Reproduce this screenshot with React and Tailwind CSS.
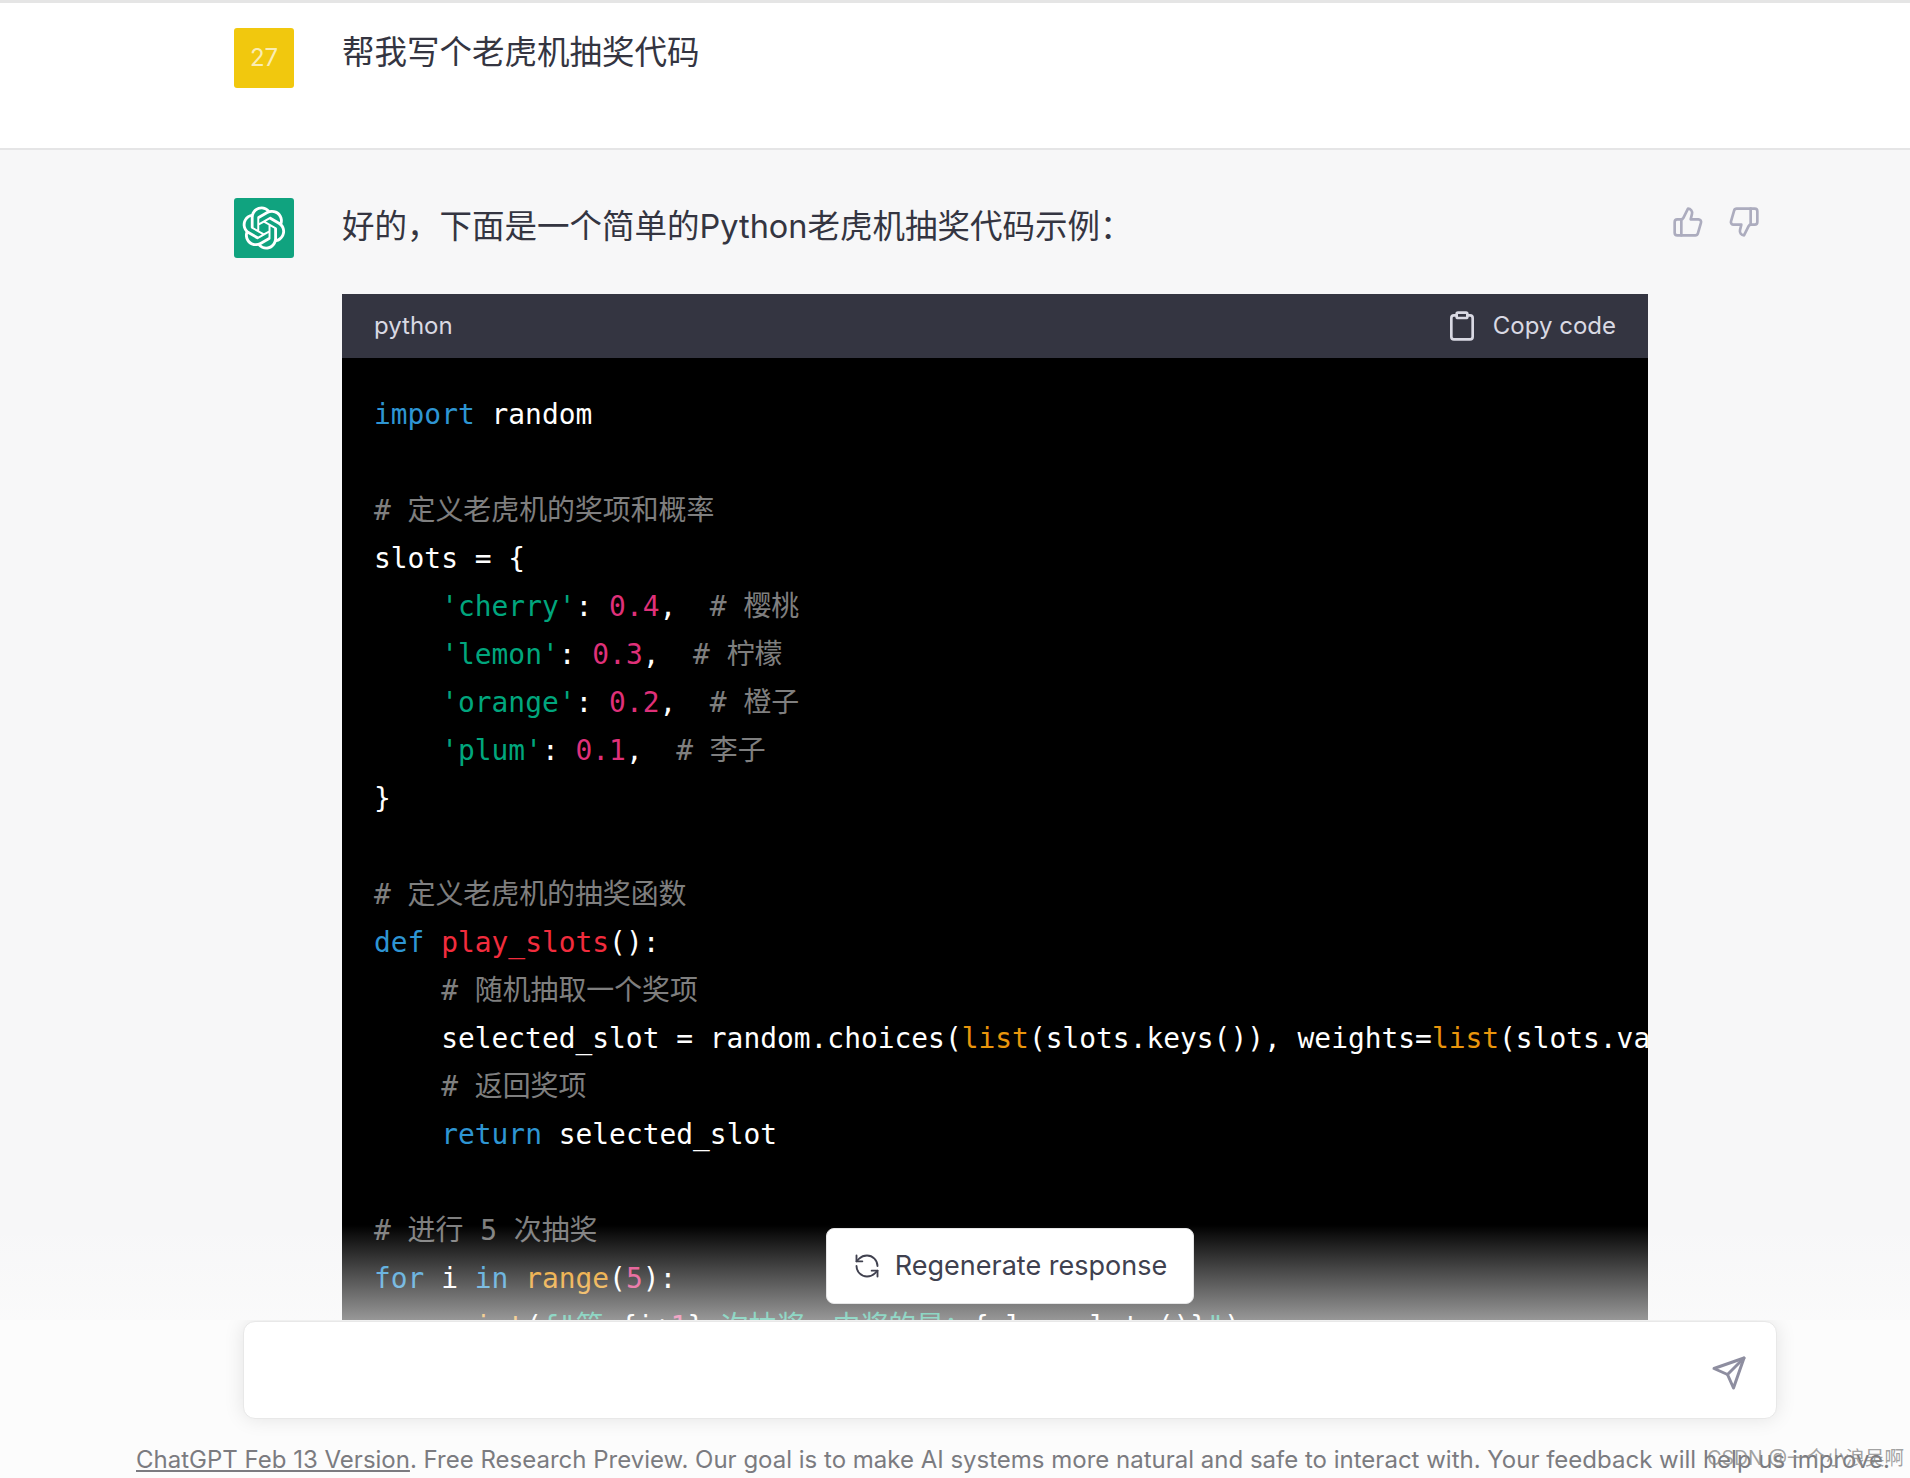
import React from 'react';
import { ThumbsUp, ThumbsDown, Clipboard, RefreshCcw } from 'lucide-react';

const K = ({ children }) => <span className="text-[#2e95d3]">{children}</span>;
const S = ({ children }) => <span className="text-[#00a67d]">{children}</span>;
const N = ({ children }) => <span className="text-[#df3079]">{children}</span>;
const C = ({ children }) => <span className="text-white/50">{children}</span>;
const F = ({ children }) => <span className="text-[#f22c3d]">{children}</span>;
const B = ({ children }) => <span className="text-[#e9950c]">{children}</span>;

const codeLines = [
  <><K>import</K> random</>,
  '',
  <C># 定义老虎机的奖项和概率</C>,
  'slots = {',
  <>    <S>'cherry'</S>: <N>0.4</N>,  <C># 樱桃</C></>,
  <>    <S>'lemon'</S>: <N>0.3</N>,  <C># 柠檬</C></>,
  <>    <S>'orange'</S>: <N>0.2</N>,  <C># 橙子</C></>,
  <>    <S>'plum'</S>: <N>0.1</N>,  <C># 李子</C></>,
  '}',
  '',
  <C># 定义老虎机的抽奖函数</C>,
  <><K>def</K> <F>play_slots</F>():</>,
  <>    <C># 随机抽取一个奖项</C></>,
  <>    selected_slot = random.choices(<B>list</B>(slots.keys()), weights=<B>list</B>(slots.values()))[<N>0</N>]</>,
  <>    <C># 返回奖项</C></>,
  <>    <K>return</K> selected_slot</>,
  '',
  <C># 进行 5 次抽奖</C>,
  <><K>for</K> i <K>in</K> <B>range</B>(<N>5</N>):</>,
  <>    <B>print</B>(<S>f"第 </S>{'{'}i+<N>1</N>{'}'}<S> 次抽奖，中奖的是：</S>{'{'}play_slots(){'}'}<S>"</S>)</>,
];

const OpenAILogo = () => (
  <svg viewBox="0 0 41 41" className="w-11 h-11" fill="none">
    <path
      fill="#ffffff"
      d="M37.5324 16.8707C37.9808 15.5241 38.1363 14.0974 37.9886 12.6859C37.8409 11.2744 37.3934 9.91076 36.676 8.68622C35.6126 6.83404 33.9882 5.3676 32.0373 4.4985C30.0864 3.62941 27.9098 3.40259 25.8215 3.85078C24.8796 2.7893 23.7219 1.94125 22.4257 1.36341C21.1295 0.785575 19.7249 0.491269 18.3058 0.500197C16.1708 0.495044 14.0893 1.16803 12.3614 2.42214C10.6335 3.67624 9.34853 5.44666 8.6917 7.47815C7.30085 7.76286 5.98686 8.3414 4.8377 9.17505C3.68854 10.0087 2.73073 11.0782 2.02839 12.312C0.956464 14.1591 0.498905 16.2988 0.721698 18.4228C0.944492 20.5467 1.83612 22.5449 3.268 24.1293C2.81966 25.4759 2.66413 26.9026 2.81182 28.3141C2.95951 29.7256 3.40701 31.0892 4.12437 32.3138C5.18791 34.1659 6.8123 35.6322 8.76321 36.5013C10.7141 37.3704 12.8907 37.5973 14.9789 37.1492C15.9208 38.2107 17.0786 39.0587 18.3747 39.6366C19.6709 40.2144 21.0755 40.5087 22.4946 40.4998C24.6307 40.5054 26.7133 39.8321 28.4418 38.5772C30.1704 37.3223 31.4556 35.5506 32.1119 33.5179C33.5027 33.2332 34.8167 32.6547 35.9659 31.821C37.115 30.9874 38.0728 29.9178 38.7752 28.684C39.8458 26.8371 40.3023 24.6979 40.0789 22.5748C39.8556 20.4517 38.9639 18.4544 37.5324 16.8707ZM22.4978 37.8849C20.7443 37.8874 19.0459 37.2733 17.6994 36.1501C17.7601 36.117 17.8666 36.0586 17.936 36.0161L25.9004 31.4156C26.1003 31.3019 26.2663 31.137 26.3813 30.9378C26.4964 30.7386 26.5563 30.5124 26.5549 30.2825V19.0542L29.9213 20.998C29.9389 21.0068 29.9541 21.0198 29.9656 21.0359C29.977 21.052 29.9842 21.0707 29.9867 21.0902V30.3889C29.9842 32.375 29.1946 34.2791 27.7909 35.6841C26.3872 37.0892 24.4838 37.8806 22.4978 37.8849ZM6.39227 31.0064C5.51397 29.4888 5.19742 27.7107 5.49804 25.9832C5.55718 26.0187 5.66048 26.0818 5.73461 26.1244L13.699 30.7248C13.8975 30.8408 14.1233 30.902 14.3532 30.902C14.583 30.902 14.8088 30.8408 15.0073 30.7248L24.731 25.1103V28.9979C24.7321 29.0177 24.7283 29.0376 24.7199 29.0556C24.7115 29.0736 24.6988 29.0893 24.6829 29.1012L16.6317 33.7497C14.9096 34.7416 12.8643 35.0097 10.9447 34.4954C9.02506 33.9811 7.38785 32.7263 6.39227 31.0064ZM4.29707 13.6194C5.17156 12.0998 6.55279 10.9364 8.19885 10.3327C8.19885 10.4013 8.19491 10.5228 8.19491 10.6071V19.808C8.19351 20.0378 8.25334 20.2638 8.36823 20.4629C8.48312 20.6619 8.64893 20.8267 8.84863 20.9404L18.5723 26.5542L15.206 28.4979C15.1894 28.5089 15.1703 28.5155 15.1505 28.5173C15.1307 28.5191 15.1107 28.516 15.0924 28.5082L7.04046 23.8557C5.32135 22.8601 4.06716 21.2235 3.55289 19.3046C3.03862 17.3858 3.30624 15.3413 4.29707 13.6194ZM31.955 20.0556L22.2312 14.4411L25.5976 12.4981C25.6142 12.4872 25.6333 12.4805 25.6531 12.4787C25.6729 12.4769 25.6928 12.4801 25.7111 12.4879L33.7631 17.1364C34.9967 17.849 36.0017 18.8982 36.6606 20.1613C37.3194 21.4244 37.6047 22.849 37.4832 24.2684C37.3617 25.6878 36.8382 27.0432 35.9743 28.1759C35.1103 29.3086 33.9415 30.1717 32.6047 30.6641C32.6047 30.5947 32.6047 30.4733 32.6047 30.3889V21.188C32.6066 20.9586 32.5474 20.7328 32.4332 20.5338C32.319 20.3348 32.154 20.1698 31.955 20.0556ZM35.3055 15.0128C35.2464 14.9765 35.1431 14.9142 35.069 14.8717L27.1045 10.2712C26.906 10.1554 26.6803 10.0943 26.4504 10.0943C26.2206 10.0943 25.9948 10.1554 25.7963 10.2712L16.0726 15.8858V11.9982C16.0715 11.9783 16.0753 11.9585 16.0837 11.9405C16.0921 11.9225 16.1048 11.9068 16.1207 11.8949L24.1719 7.25025C25.4053 6.53903 26.8158 6.19376 28.2383 6.25482C29.6608 6.31589 31.0364 6.78077 32.2044 7.59508C33.3723 8.40939 34.2842 9.53945 34.8334 10.8531C35.3826 12.1667 35.5464 13.6095 35.3055 15.0128ZM14.2424 21.9419L10.8752 19.9981C10.8576 19.9893 10.8423 19.9763 10.8309 19.9602C10.8195 19.9441 10.8122 19.9254 10.8098 19.9058V10.6071C10.8107 9.18295 11.2173 7.78848 11.9819 6.58696C12.7466 5.38544 13.8377 4.42659 15.1275 3.82264C16.4173 3.21869 17.8524 2.99464 19.2649 3.1767C20.6775 3.35876 22.0089 3.93941 23.1034 4.85067C23.0427 4.88379 22.937 4.94215 22.8668 4.98473L14.9024 9.58517C14.7025 9.69878 14.5366 9.86356 14.4215 10.0626C14.3065 10.2616 14.2466 10.4877 14.2479 10.7175L14.2424 21.9419ZM16.071 17.9991L20.4018 15.4978L24.7325 17.9975V22.9985L20.4018 25.4983L16.071 22.9985V17.9991Z"
    />
  </svg>
);

const SendIcon = () => (
  <svg viewBox="0 0 24 24" className="w-9 h-9" fill="none" stroke="#8e8ea0" strokeWidth="2" strokeLinecap="round" strokeLinejoin="round">
    <line x1="22" y1="2" x2="11" y2="13" />
    <polygon points="22 2 15 22 11 13 2 9 22 2" />
  </svg>
);

const CodeBlock = () => (
  <div className="w-[1306px] mb-[200px]">
    <div className="h-16 px-8 flex items-center justify-between bg-[#343541] text-[#d9d9e3] text-2xl">
      <span>python</span>
      <div className="flex items-center gap-[15px]">
        <Clipboard className="w-8 h-8" strokeWidth={2} />
        <span>Copy code</span>
      </div>
    </div>
    <div className="bg-black pt-[33px] px-8 pb-8 overflow-hidden text-white text-[27.9px] leading-[48px] whitespace-pre font-['DejaVu_Sans_Mono','Noto_Sans_CJK_SC',monospace]">
      {codeLines.map((line, i) => (
        <div key={i} className="h-12">{line}</div>
      ))}
    </div>
  </div>
);

export default function App() {
  return (
    <div className="relative h-[1478px] w-[1910px] overflow-hidden bg-[#f7f7f8] text-[#343541] font-['Inter','Noto_Sans_CJK_SC',sans-serif]">
      <div className="h-[3px] bg-[#e5e5e5]" />

      {/* user message */}
      <div className="h-[147px] bg-white border-b-2 border-[#e5e5e6] pt-[25px] pl-[234px] flex gap-12">
        <div className="w-[60px] h-[60px] rounded-[3px] bg-[#f1c80e] text-white/70 text-2xl flex items-center justify-center">27</div>
        <div className="text-[32.5px] leading-[50px]">帮我写个老虎机抽奖代码</div>
      </div>

      {/* assistant message */}
      <div className="pt-12 pl-[234px] flex gap-12">
        <div className="w-[60px] h-[60px] rounded-[3px] bg-[#10a37f] flex items-center justify-center shrink-0">
          <OpenAILogo />
        </div>
        <div>
          <div className="text-[32.5px] leading-[58px] mb-[38px]">好的，下面是一个简单的Python老虎机抽奖代码示例：</div>
          <CodeBlock />
        </div>
        <div className="flex gap-6 pt-2 -ml-[24px] text-[#acacbe]">
          <ThumbsUp className="w-8 h-8" strokeWidth={2} />
          <ThumbsDown className="w-8 h-8" strokeWidth={2} />
        </div>
      </div>

      {/* bottom input panel, lies over the thread */}
      <div className="absolute inset-x-0 bottom-0 flex flex-col">
        <div className="h-[95px] pt-[3px] flex justify-center bg-[linear-gradient(to_bottom,rgba(252,252,252,0),rgba(252,252,252,0.6))]">
          <button className="w-[368px] h-[76px] ml-[110px] rounded-lg bg-white border border-[#e5e5e6] flex items-center justify-center gap-[14px] text-[27px] text-[#40414f]">
            <RefreshCcw className="w-7 h-7" strokeWidth={1.6} />
            <span>Regenerate response</span>
          </button>
        </div>
        <div className="h-[158px] bg-[#fcfcfc] pl-[243px] overflow-hidden">
          <div className="w-[1534px] h-[98px] mt-px rounded-xl bg-white shadow-[0_0_20px_rgba(0,0,0,0.1)] border border-[#e8e8e8] flex items-center justify-end pr-[29px] pt-[6px]">
            <SendIcon />
          </div>
          <div className="-ml-[107px] mt-[25px] whitespace-nowrap text-2xl leading-8 text-[#7b7b80]">
            <span className="underline">ChatGPT Feb 13 Version</span>. Free Research Preview. Our goal is to make AI systems more natural and safe to interact with. Your feedback will help us improve.
          </div>
        </div>
      </div>

      {/* CSDN watermark */}
      <div className="absolute right-[6px] bottom-[4px] text-[19.5px] leading-8 text-[#8a8a8a]/80">CSDN @一个小浪吴啊</div>
    </div>
  );
}
